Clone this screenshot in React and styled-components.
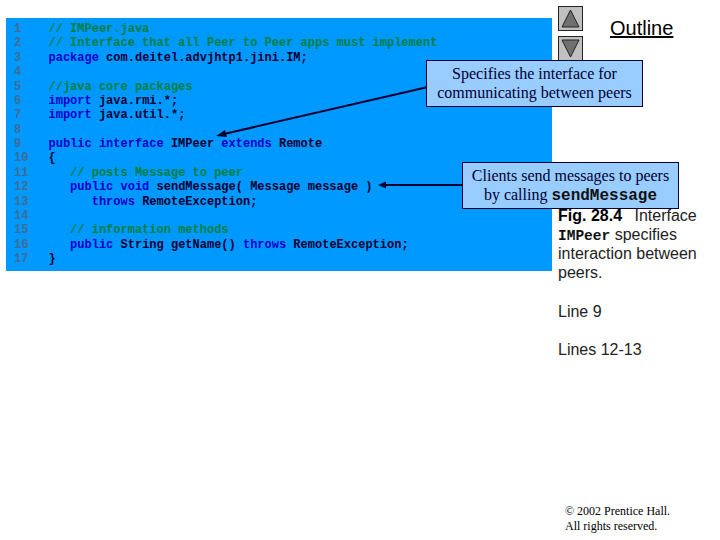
import React from "react";
import styled, { createGlobalStyle } from "styled-components";

const GlobalStyle = createGlobalStyle`
  html, body { margin: 0; padding: 0; background: #fff; }
`;

const Slide = styled.div`
  position: relative;
  width: 720px;
  height: 540px;
  overflow: hidden;
  display: flex;
  background: #fff;
`;

const LeftColumn = styled.div`
  width: 552px;
  padding: 18px 0 0 6px;
  box-sizing: border-box;
`;

const CodePanel = styled.div`
  height: 253px;
  background: #0099ff;
  padding: 4px 0 0 8px;
  box-sizing: border-box;
`;

const CodeLine = styled.div`
  display: flex;
  height: 14.375px;
  line-height: 14.375px;
  font-family: "Liberation Mono", monospace;
  font-size: 12px;
  font-weight: bold;
  white-space: pre;
`;

const LineNo = styled.span`
  width: 34.5px;
  flex: none;
  color: #3f6c94;
`;

const Comment = styled.span`
  color: #008040;
`;

const Keyword = styled.span`
  color: #0000cc;
`;

const Plain = styled.span`
  color: #000033;
`;

const RightColumn = styled.div`
  flex: 1;
  padding: 6px 0 0 6px;
  display: flex;
  flex-direction: column;
  font-family: "Liberation Sans", Arial, sans-serif;
`;

const TopRow = styled.div`
  display: flex;
  height: 200px;
`;

const NavButtons = styled.div`
  display: flex;
  flex-direction: column;
  gap: 5px;
`;

const NavButton = styled.div`
  width: 23px;
  height: 23px;
  background: #c0c0c0;
  border: 1px solid #222;
  display: flex;
  align-items: center;
  justify-content: center;
`;

const OutlineTitle = styled.div`
  margin: 10px 0 0 27px;
  font-size: 20px;
  line-height: 24px;
  color: #000;
  text-decoration: underline;
`;

const SideText = styled.div`
  font-size: 16px;
  line-height: 19px;
  color: #222;
  width: 150px;
`;

const Fig = styled.b`
  color: #000;
  margin-right: 8px;
`;

const MonoName = styled.b`
  font-family: "Liberation Mono", monospace;
  font-size: 14.5px;
  line-height: 1;
  color: #111;
`;

const SideNote = styled.div`
  margin-top: ${(p) => p.$gap}px;
  font-size: 16px;
  line-height: 19px;
  color: #222;
`;

const Copyright = styled.div`
  margin: auto 0 6px 7px;
  font-family: "Liberation Serif", "Times New Roman", serif;
  font-size: 12px;
  line-height: 15px;
  color: #000;
`;

const Callout = styled.div`
  position: absolute;
  left: ${(p) => p.$left}px;
  top: ${(p) => p.$top}px;
  width: 217px;
  height: 47px;
  box-sizing: border-box;
  border: 1px solid #000033;
  background: #99ccff;
  color: #000033;
  font-family: "Liberation Serif", "Times New Roman", serif;
  font-size: 16px;
  line-height: 19px;
  text-align: center;
  padding-top: 3px;
`;

const CalloutCode = styled.b`
  font-family: "Liberation Mono", monospace;
  font-size: 16px;
  line-height: 1;
  color: #111;
`;

const ArrowLayer = styled.svg`
  position: absolute;
  left: 0;
  top: 0;
  pointer-events: none;
`;

const Triangle = ({ down }) => (
  <svg width="19" height="19" viewBox="0 0 19 19">
    <polygon
      points={down ? "1,1 18,1 9.5,18" : "9.5,1 18,18 1,18"}
      fill="#707070"
      stroke="#222"
      strokeWidth="1"
    />
  </svg>
);

const c = (t) => <Comment>{t}</Comment>;
const k = (t) => <Keyword>{t}</Keyword>;
const p = (t) => <Plain>{t}</Plain>;

const code = [
  [c("// IMPeer.java")],
  [c("// Interface that all Peer to Peer apps must implement")],
  [k("package"), p(" com.deitel.advjhtp1.jini.IM;")],
  [],
  [c("//java core packages")],
  [k("import"), p(" java.rmi.*;")],
  [k("import"), p(" java.util.*;")],
  [],
  [k("public interface"), p(" IMPeer "), k("extends"), p(" Remote")],
  [p("{")],
  [p("   "), c("// posts Message to peer")],
  [p("   "), k("public void"), p(" sendMessage( Message message )")],
  [p("      "), k("throws"), p(" RemoteException;")],
  [],
  [p("   "), c("// information methods")],
  [p("   "), k("public"), p(" String getName() "), k("throws"), p(" RemoteException;")],
  [p("}")],
];

export default function App() {
  return (
    <Slide>
      <GlobalStyle />
      <LeftColumn>
        <CodePanel>
          {code.map((parts, i) => (
            <CodeLine key={i}>
              <LineNo>{i + 1}</LineNo>
              {parts.map((part, j) => (
                <React.Fragment key={j}>{part}</React.Fragment>
              ))}
            </CodeLine>
          ))}
        </CodePanel>
      </LeftColumn>
      <RightColumn>
        <TopRow>
          <NavButtons>
            <NavButton><Triangle /></NavButton>
            <NavButton><Triangle down /></NavButton>
          </NavButtons>
          <OutlineTitle>Outline</OutlineTitle>
        </TopRow>
        <SideText>
          <Fig>Fig. 28.4</Fig> Interface <MonoName>IMPeer</MonoName> specifies interaction between peers.
        </SideText>
        <SideNote $gap={20}>Line 9</SideNote>
        <SideNote $gap={19}>Lines 12-13</SideNote>
        <Copyright>
          © 2002 Prentice Hall.
          <br />
          All rights reserved.
        </Copyright>
      </RightColumn>
      <ArrowLayer width="720" height="540">
        <line x1="428" y1="87" x2="224" y2="134" stroke="#000033" strokeWidth="2" />
        <polygon points="216,136 225,130 227,137" fill="#000033" />
        <line x1="462" y1="185" x2="384" y2="185" stroke="#000033" strokeWidth="2" />
        <polygon points="378,185 386,181.5 386,188.5" fill="#000033" />
      </ArrowLayer>
      <Callout $left={426} $top={60}>
        Specifies the interface for
        <br />
        communicating between peers
      </Callout>
      <Callout $left={462} $top={162}>
        Clients send messages to peers
        <br />
        by calling <CalloutCode>sendMessage</CalloutCode>
      </Callout>
    </Slide>
  );
}
